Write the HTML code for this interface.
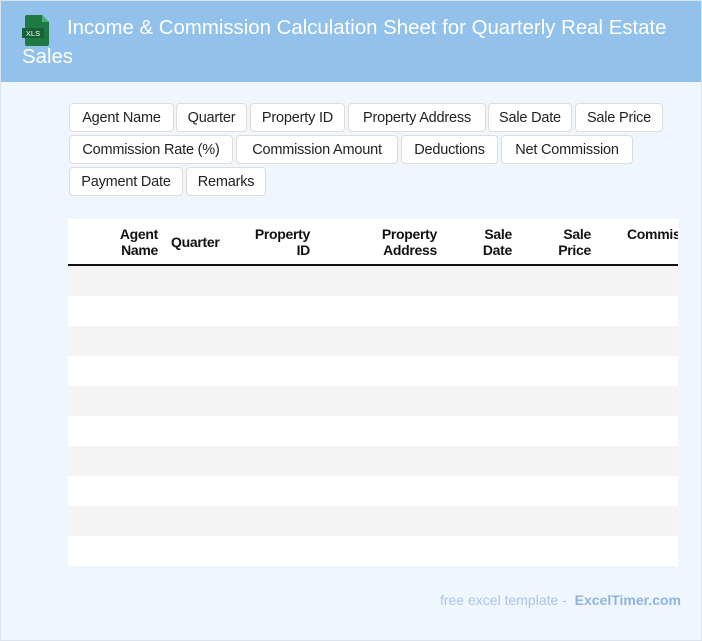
<!DOCTYPE html>
<html><head><style>
body{margin:0;width:702px;height:641px;background:#f0f6fe;font-family:"Liberation Sans",Roboto,sans-serif;overflow:hidden;position:relative}
.frame{position:absolute;inset:0;border:1px solid #dde3ea;box-sizing:border-box;pointer-events:none}
.hdr{position:absolute;left:1px;top:1px;width:700px;height:81px;background:#92c1ec}
.hdr .t{position:absolute;left:21px;top:13px;width:670px;color:#fff;font-size:20.4px;line-height:29px;text-indent:45px}
.icon{position:absolute;left:21px;top:13px}
.tag{position:absolute;background:#fff;border:1px solid #dcdcdc;border-radius:4px;height:29px;line-height:28px;text-align:center;font-size:14.5px;color:#222;box-sizing:border-box;white-space:nowrap;letter-spacing:-0.2px}
.tbl{position:absolute;left:68px;top:219px;width:610px;height:347px;background:#fff;overflow:hidden}
.th{position:absolute;top:0;height:47px;border-bottom:2px solid #111;width:610px;box-sizing:border-box}
.th span{position:absolute;font-weight:bold;font-size:14px;line-height:16px;text-align:right;color:#111;font-family:"Liberation Sans",Arial,sans-serif;letter-spacing:-0.3px}
.row{position:absolute;left:0;width:610px;height:30px}
.foot{position:absolute;right:21px;top:592px;font-size:14px;color:#a9c5ea}
.foot b{color:#8fb3e3}
</style></head><body>
<div class="hdr"><svg class="icon" width="30" height="32" viewBox="0 0 30 32"><path d="M5 1h15l7 7v22a2 2 0 0 1-2 2H5a2 2 0 0 1-2-2V3a2 2 0 0 1 2-2z" fill="#1d7a43"/><path d="M20 1v7h7z" fill="#4caf74"/><rect x="0" y="14" width="22" height="10" fill="#17603a"/><text x="11" y="22" fill="#fff" font-size="7.5" text-anchor="middle" font-family="Liberation Sans">XLS</text></svg><div class="t">Income &amp; Commission Calculation Sheet for Quarterly Real Estate Sales</div></div>

<span class="tag" style="left:69px;top:103px;width:105px">Agent Name</span>
<span class="tag" style="left:176px;top:103px;width:71px">Quarter</span>
<span class="tag" style="left:250px;top:103px;width:95px">Property ID</span>
<span class="tag" style="left:348px;top:103px;width:138px">Property Address</span>
<span class="tag" style="left:488px;top:103px;width:84px">Sale Date</span>
<span class="tag" style="left:575px;top:103px;width:88px">Sale Price</span>
<span class="tag" style="left:69px;top:135px;width:164px">Commission Rate (%)</span>
<span class="tag" style="left:236px;top:135px;width:162px">Commission Amount</span>
<span class="tag" style="left:401px;top:135px;width:97px">Deductions</span>
<span class="tag" style="left:501px;top:135px;width:132px">Net Commission</span>
<span class="tag" style="left:69px;top:167px;width:114px">Payment Date</span>
<span class="tag" style="left:186px;top:167px;width:80px">Remarks</span>

<div class="tbl">
<div class="th">
<span style="right:520px;top:7px">Agent<br>Name</span>
<span style="left:103px;top:15px">Quarter</span>
<span style="right:368px;top:7px">Property<br>ID</span>
<span style="right:241px;top:7px">Property<br>Address</span>
<span style="right:166px;top:7px">Sale<br>Date</span>
<span style="right:87px;top:7px">Sale<br>Price</span>
<span style="left:559px;top:7px">Commission</span>
</div>
<div class="row" style="top:47px;background:#f4f4f4"></div>
<div class="row" style="top:107px;background:#f4f4f4"></div>
<div class="row" style="top:167px;background:#f4f4f4"></div>
<div class="row" style="top:227px;background:#f4f4f4"></div>
<div class="row" style="top:287px;background:#f4f4f4"></div>
</div>
<div class="foot">free excel template - &nbsp;<b>ExcelTimer.com</b></div>
<div class="frame"></div>
</body></html>
